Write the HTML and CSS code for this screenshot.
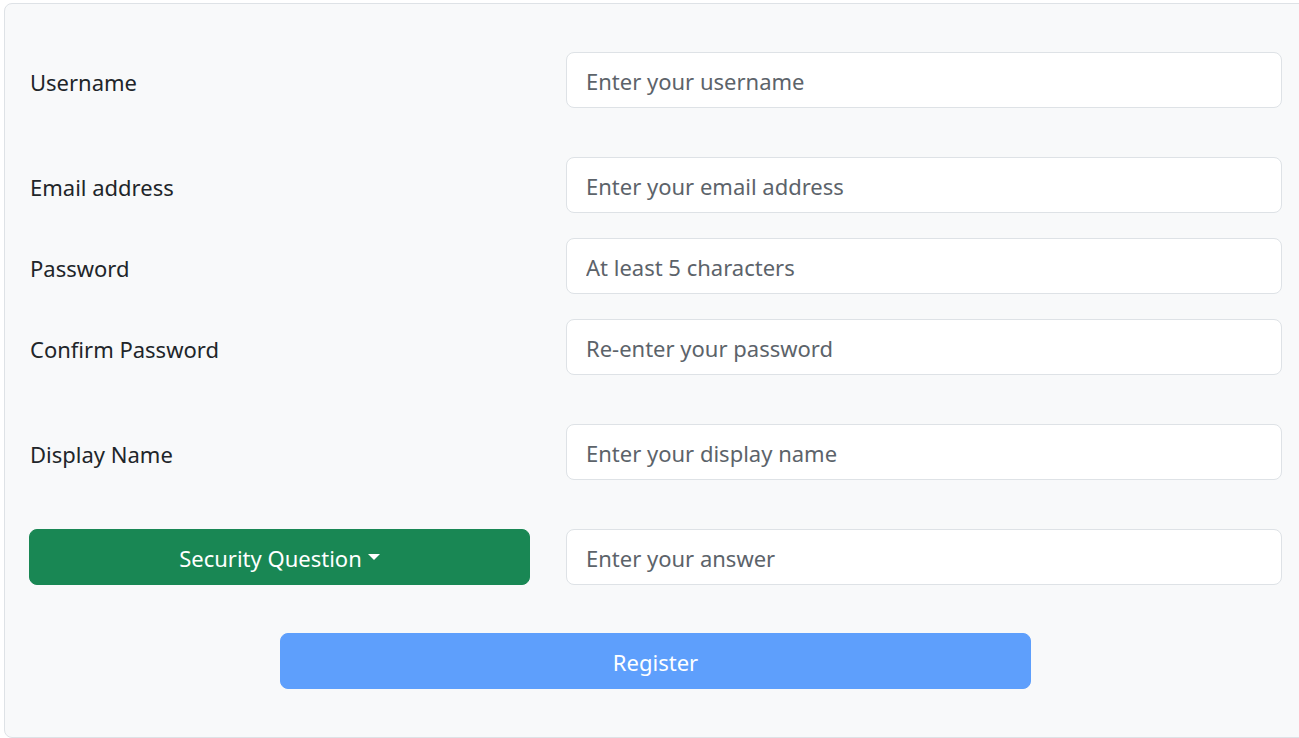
FILE: index.html
```html
<!DOCTYPE html>
<html lang="en">
<head>
<meta charset="utf-8">
<title>Register</title>
<link rel="stylesheet" href="styles.css">
</head>
<body>
<form class="card">
  <div class="row tall">
    <label class="label" for="u">Username</label>
    <input class="field" id="u" type="text" placeholder="Enter your username">
  </div>
  <div class="row">
    <label class="label" for="e">Email address</label>
    <input class="field" id="e" type="email" placeholder="Enter your email address">
  </div>
  <div class="row">
    <label class="label" for="p">Password</label>
    <input class="field" id="p" type="password" placeholder="At least 5 characters">
  </div>
  <div class="row tall">
    <label class="label" for="c">Confirm Password</label>
    <input class="field" id="c" type="password" placeholder="Re-enter your password">
  </div>
  <div class="row tall">
    <label class="label" for="d">Display Name</label>
    <input class="field" id="d" type="text" placeholder="Enter your display name">
  </div>
  <div class="row tall">
    <button type="button" class="btn-sq">Security Question<span class="caret"></span></button>
    <input class="field" type="text" placeholder="Enter your answer">
  </div>
  <div class="submit-row">
    <button type="submit" class="btn-reg" disabled>Register</button>
  </div>
</form>
</body>
</html>
```
FILE: styles.css
```css
html, body {
  margin: 0;
  padding: 0;
  overflow: hidden;
  background: #ffffff;
}
body {
  font-family: "Noto Sans", "Open Sans", "Liberation Sans", sans-serif;
  font-size: 22px;
  color: #212529;
}
.card {
  box-sizing: border-box;
  margin: 3px 0 0 4px;
  width: 1303px;
  height: 735px;
  background: #f8f9fa;
  border: 1px solid #dee2e6;
  border-radius: 8px;
  padding: 48px 24px 0 24px;
  display: flex;
  flex-direction: column;
}
.row {
  display: grid;
  grid-template-columns: 501px 716px;
  column-gap: 36px;
  align-items: center;
  margin-bottom: 25px;
}
.row.tall {
  margin-bottom: 49px;
}
.label {
  padding-left: 1px;
  padding-top: 5px;
  line-height: 1.5;
}
.field {
  box-sizing: border-box;
  height: 56px;
  width: 716px;
  padding: 2px 19px 0 19px;
  font: inherit;
  color: #212529;
  background: #ffffff;
  border: 1px solid #dee2e6;
  border-radius: 8px;
  outline: none;
}
.field::placeholder {
  color: #5c636a;
  opacity: 1;
}
.btn-sq {
  box-sizing: border-box;
  height: 56px;
  width: 501px;
  padding: 2px 0 0 0;
  font: inherit;
  color: #ffffff;
  background: #198754;
  border: 1px solid #198754;
  border-radius: 8px;
  display: flex;
  align-items: center;
  justify-content: center;
}
.caret {
  display: inline-block;
  margin-left: 6px;
  width: 0;
  height: 0;
  border-top: 6.5px solid #ffffff;
  border-left: 6.5px solid transparent;
  border-right: 6.5px solid transparent;
  margin-top: -3px;
}
.submit-row {
  display: flex;
  justify-content: center;
  margin-top: -1px;
}
.btn-reg {
  box-sizing: border-box;
  height: 56px;
  width: 751px;
  padding: 2px 0 0 0;
  font: inherit;
  color: #ffffff;
  background: #5e9ffc;
  border: 1px solid #5e9ffc;
  border-radius: 8px;
}
```
